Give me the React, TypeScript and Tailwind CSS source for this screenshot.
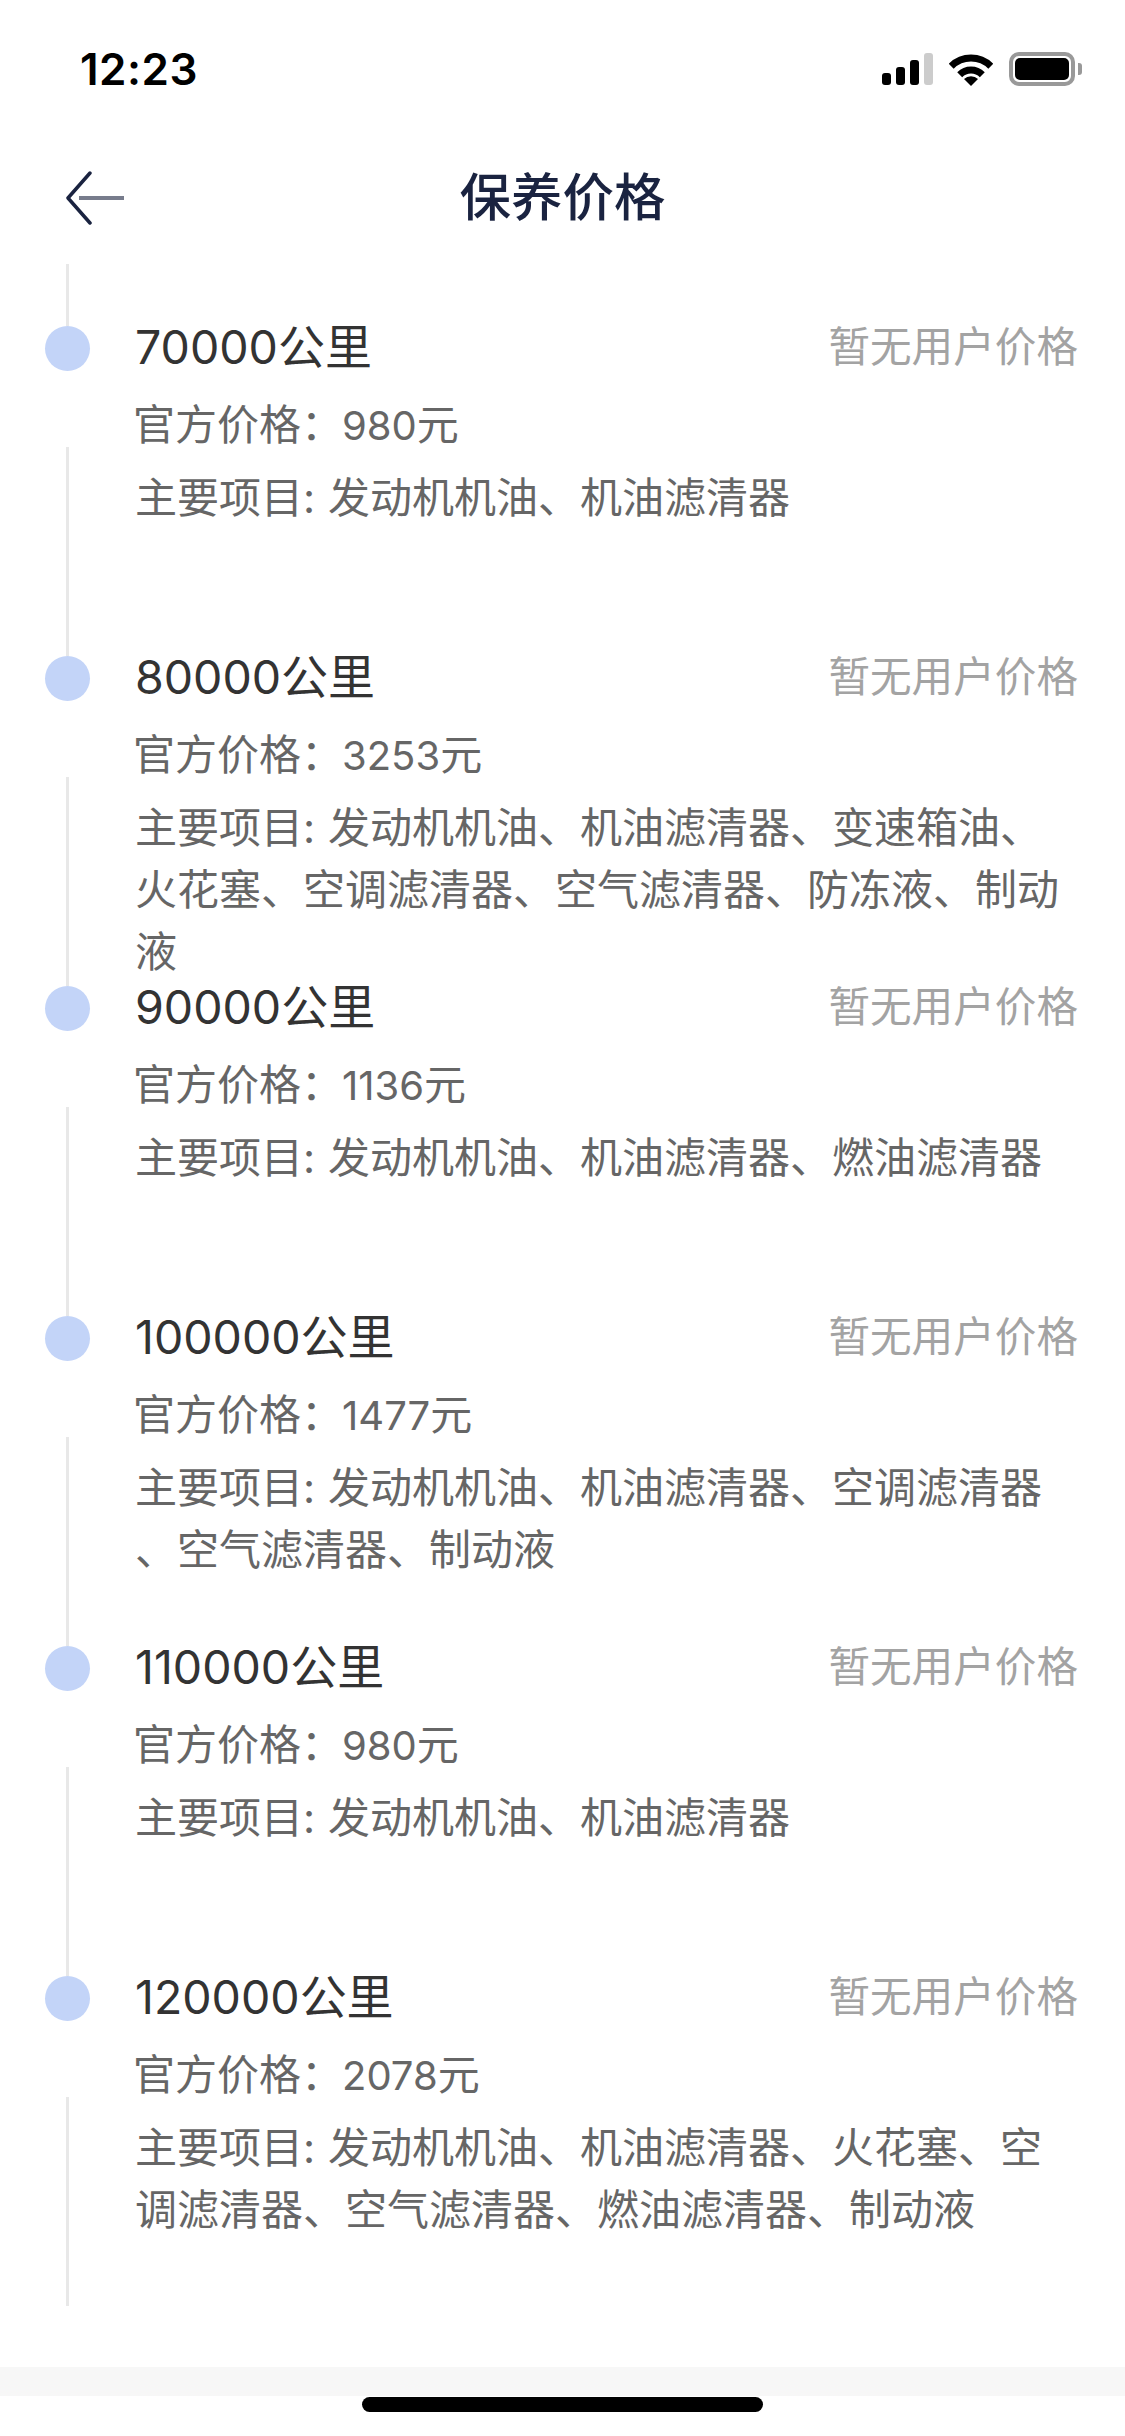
const FONT = "font-['Inter','Noto_Sans_CJK_SC',sans-serif]";

type Plan = {
  km: string;
  price: string;
  lines: string[];
};

const PLANS: Plan[] = [
  { km: "70000", price: "980", lines: ["发动机机油、机油滤清器"] },
  {
    km: "80000",
    price: "3253",
    lines: ["发动机机油、机油滤清器、变速箱油、", "火花塞、空调滤清器、空气滤清器、防冻液、制动", "液"],
  },
  { km: "90000", price: "1136", lines: ["发动机机油、机油滤清器、燃油滤清器"] },
  {
    km: "100000",
    price: "1477",
    lines: ["发动机机油、机油滤清器、空调滤清器", "、空气滤清器、制动液"],
  },
  { km: "110000", price: "980", lines: ["发动机机油、机油滤清器"] },
  {
    km: "120000",
    price: "2078",
    lines: ["发动机机油、机油滤清器、火花塞、空", "调滤清器、空气滤清器、燃油滤清器、制动液"],
  },
];

function StatusIcons() {
  return (
    <div className="flex items-center">
      <div className="flex items-end gap-[5px] h-[32px]">
        <div className="w-[9px] h-[12px] rounded-[3px] bg-black" />
        <div className="w-[9px] h-[18px] rounded-[3px] bg-black" />
        <div className="w-[9px] h-[25px] rounded-[3px] bg-black" />
        <div className="w-[9px] h-[32px] rounded-[3px] bg-[#cccccc]" />
      </div>
      <svg className="ml-[16px]" width="44" height="33" viewBox="0 0 44 33">
        <path d="M2.2 13.2A28 28 0 0 1 41.8 13.2" fill="none" stroke="#000" strokeWidth="7" />
        <path d="M10.7 21.7A16 16 0 0 1 33.3 21.7" fill="none" stroke="#000" strokeWidth="7" />
        <path d="M22 33L15 26A10 10 0 0 1 29 26Z" fill="#000" />
      </svg>
      <div className="ml-[16px] w-[66px] h-[34px] rounded-[10px] border-[4px] border-[#999999] p-[2px]">
        <div className="w-full h-full rounded-[5px] bg-black" />
      </div>
      <div className="ml-[3px] w-[4px] h-[12px] rounded-r-[3px] bg-[#999999]" />
    </div>
  );
}

function BackArrow() {
  return (
    <svg width="60" height="54" viewBox="0 0 60 54">
      <path d="M26 2L4 27L26 52" fill="none" stroke="#1a2340" strokeWidth="3.5" strokeLinecap="round" strokeLinejoin="round" />
      <path d="M15 27H61" fill="none" stroke="#777c8c" strokeWidth="4" />
    </svg>
  );
}

function PlanRow({ plan }: { plan: Plan }) {
  return (
    <div className="flex h-[330px] pl-[45px] pr-[47px]">
      <div className="flex flex-col items-center w-[45px] shrink-0">
        <div className="w-[45px] h-[45px] rounded-full bg-[#c3d4f8]" />
        <div className="w-[3px] mt-[76px] flex-1 bg-[#e8e8e8]" />
      </div>
      <div className="flex-1 pl-[45px]">
        <div className="flex items-center justify-between h-[42px]">
          <span className="text-[47px] text-[#333333]">
            <span className="text-[46.5px]">{plan.km}</span>公里
          </span>
          <span className="text-[41.6px] text-[#a3a3a3]">暂无用户价格</span>
        </div>
        <div className="mt-[26px] -ml-[2px] text-[42px] leading-[62px] text-[#666666] whitespace-nowrap">
          官方价格：<span className="text-[40px] -ml-[1px]">{plan.price}</span>元
        </div>
        <div className="mt-[10px] text-[42px] leading-[62px] text-[#666666] whitespace-nowrap">
          {plan.lines.map((line, i) => (
            <div key={line}>
              {i === 0 && <span className="inline-block w-[193px]">主要项目:</span>}
              {line}
            </div>
          ))}
        </div>
      </div>
    </div>
  );
}

export default function App() {
  return (
    <div className={`w-[1125px] h-[2436px] bg-white overflow-hidden ${FONT}`}>
      <div className="flex items-center justify-between h-[132px] pl-[80px] pr-[43px] pt-[6px]">
        <span className="text-[44px] font-semibold tracking-[0.5px] text-black">12:23</span>
        <StatusIcons />
      </div>
      <div className="grid grid-cols-[1fr_auto_1fr] items-center h-[132px] pl-[64px]">
        <BackArrow />
        <h1 className="text-[51.5px] font-medium text-[#1a2340] -ml-[64px]">保养价格</h1>
        <div />
      </div>
      <div className="pl-[66px]">
        <div className="w-[3px] h-[62px] bg-[#e8e8e8]" />
      </div>
      {PLANS.map((plan) => (
        <PlanRow key={plan.km} plan={plan} />
      ))}
      <div className="mt-[61px] h-[29px] bg-[#f7f7f7]" />
      <div className="flex justify-center pt-[1px]">
        <div className="w-[401px] h-[15px] rounded-full bg-black" />
      </div>
    </div>
  );
}
